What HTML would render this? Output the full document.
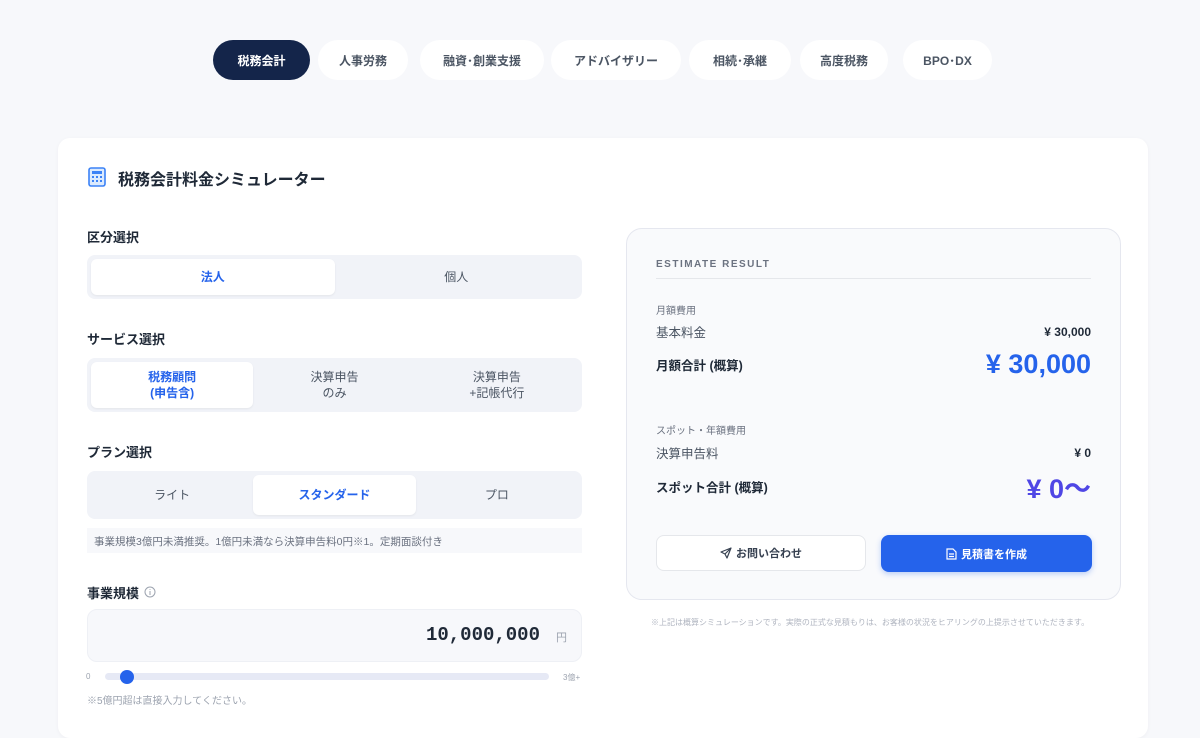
<!DOCTYPE html>
<html><head><meta charset="utf-8"><style>
*{box-sizing:border-box;margin:0;padding:0}
body{width:1200px;height:720px;overflow:hidden;background:#f7f8fb;font-family:"Liberation Sans","Noto Sans CJK JP",sans-serif;color:#1f2937;position:relative}
.tab{position:absolute;top:40px;height:40px;border-radius:20px;background:#fff;font-size:12px;font-weight:700;color:#4b5563;display:flex;align-items:center;justify-content:center}
.tab.on{background:#14254a;color:#fff}
.card{position:absolute;left:58px;top:138px;width:1090px;height:600px;background:#fff;border-radius:12px;box-shadow:0 1px 4px rgba(0,0,0,.04)}
.a{position:absolute}
.lbl{position:absolute;left:87px;font-size:13px;font-weight:700;color:#1f2937}
.seg{position:absolute;left:87px;width:495px;background:#f1f3f8;border-radius:8px;display:flex;padding:4px}
.seg div{flex:1;display:flex;align-items:center;justify-content:center;text-align:center;font-size:12px;color:#4b5563;border-radius:6px;line-height:1.35}
.seg .s{background:#fff;color:#2563eb;font-weight:700;box-shadow:0 1px 2px rgba(0,0,0,.06)}
.res{position:absolute;left:626px;top:228px;width:495px;height:372px;background:#f9fafc;border:1px solid #e5e7ef;border-radius:16px}
.row{position:absolute;left:29px;right:29px;display:flex;justify-content:space-between;align-items:center}
</style></head><body>
<div class="tab on" style="left:213px;width:97px">税務会計</div>
<div class="tab" style="left:318px;width:90px">人事労務</div>
<div class="tab" style="left:420px;width:124px">融資･創業支援</div>
<div class="tab" style="left:551px;width:130px">アドバイザリー</div>
<div class="tab" style="left:689px;width:102px">相続･承継</div>
<div class="tab" style="left:800px;width:88px">高度税務</div>
<div class="tab" style="left:903px;width:89px">BPO･DX</div>

<div class="card"></div>
<svg class="a" style="left:88px;top:167px" width="18" height="20" viewBox="0 0 18 20"><rect x="1" y="1" width="16" height="18" rx="2" fill="#dbeafe" stroke="#3b82f6" stroke-width="1.6"/><rect x="4" y="4" width="10" height="3" fill="#3b82f6"/><g fill="#3b82f6"><rect x="4" y="9" width="2" height="2"/><rect x="8" y="9" width="2" height="2"/><rect x="12" y="9" width="2" height="2"/><rect x="4" y="13" width="2" height="2"/><rect x="8" y="13" width="2" height="2"/><rect x="12" y="13" width="2" height="2"/></g></svg>
<div class="a" style="left:118px;top:166px;font-size:16px;font-weight:700;color:#1f2937">税務会計料金シミュレーター</div>

<div class="lbl" style="top:227px">区分選択</div>
<div class="seg" style="top:255px;height:44px"><div class="s">法人</div><div>個人</div></div>
<div class="lbl" style="top:329px">サービス選択</div>
<div class="seg" style="top:358px;height:54px"><div class="s">税務顧問<br>(申告含)</div><div>決算申告<br>のみ</div><div>決算申告<br>+記帳代行</div></div>
<div class="lbl" style="top:442px">プラン選択</div>
<div class="seg" style="top:471px;height:48px"><div>ライト</div><div class="s">スタンダード</div><div>プロ</div></div>
<div class="a" style="left:87px;top:528px;width:495px;height:25px;background:#f7f8fb;font-size:10.5px;color:#6b7280;padding:6px 7px">事業規模3億円未満推奨。1億円未満なら決算申告料0円※1。定期面談付き</div>
<div class="lbl" style="top:583px">事業規模</div>
<svg class="a" style="left:144px;top:586px" width="12" height="12"><circle cx="6" cy="6" r="5" fill="none" stroke="#9ca3af"/><path d="M6 5v4M6 3.2v.8" stroke="#9ca3af"/></svg>
<div class="a" style="left:87px;top:609px;width:495px;height:53px;background:#f7f8fb;border:1px solid #eef0f5;border-radius:10px"></div>
<div class="a" style="left:300px;top:624px;width:240px;text-align:right;font-family:'Liberation Mono',monospace;font-size:19px;font-weight:700;color:#1f2937">10,000,000</div>
<div class="a" style="left:556px;top:629px;font-size:11px;color:#9ca3af">円</div>
<div class="a" style="left:86px;top:672px;font-size:8px;color:#9ca3af">0</div>
<div class="a" style="left:105px;top:673px;width:444px;height:7px;background:#e6e9f5;border-radius:4px"></div>
<div class="a" style="left:120px;top:670px;width:14px;height:14px;border-radius:50%;background:#2563eb"></div>
<div class="a" style="left:563px;top:672px;font-size:8px;color:#9ca3af">3億+</div>
<div class="a" style="left:87px;top:692px;font-size:10px;color:#9ca3af">※5億円超は直接入力してください。</div>

<div class="res">
<div class="a" style="left:29px;top:30px;font-size:10px;letter-spacing:1.5px;color:#6b7280;font-weight:700">ESTIMATE RESULT</div>
<div class="a" style="left:29px;top:49px;width:435px;height:1px;background:#e5e7eb"></div>
<div class="a" style="left:29px;top:73px;font-size:10px;color:#6b7280">月額費用</div>
<div class="row" style="top:93px"><span style="font-size:12.5px;color:#4b5563">基本料金</span><span style="font-size:12px;font-weight:700">¥ 30,000</span></div>
<div class="row" style="top:118px;height:34px"><span style="font-size:12.5px;font-weight:700">月額合計 (概算)</span><span style="font-size:27px;font-weight:700;color:#2563eb">¥ 30,000</span></div>
<div class="a" style="left:29px;top:193px;font-size:10px;color:#6b7280">スポット・年額費用</div>
<div class="row" style="top:214px"><span style="font-size:12.5px;color:#4b5563">決算申告料</span><span style="font-size:12px;font-weight:700">¥ 0</span></div>
<div class="row" style="top:240px;height:34px"><span style="font-size:12.5px;font-weight:700">スポット合計 (概算)</span><span style="font-size:27px;font-weight:700;color:#4f46e5">¥ 0〜</span></div>
<div class="a" style="left:29px;top:306px;width:210px;height:36px;background:#fff;border:1px solid #e5e7eb;border-radius:8px;display:flex;align-items:center;justify-content:center;font-size:11px;font-weight:700;color:#374151"><svg width="12" height="12" viewBox="0 0 12 12" style="margin-right:4px"><path d="M11 1L1 5l4 2 2 4z M5 7l6-6" fill="none" stroke="#374151" stroke-width="1.2" stroke-linejoin="round"/></svg>お問い合わせ</div>
<div class="a" style="left:254px;top:306px;width:211px;height:37px;background:#2563eb;border-radius:8px;display:flex;align-items:center;justify-content:center;font-size:11px;font-weight:700;color:#fff;box-shadow:0 2px 6px rgba(37,99,235,.3)"><svg width="11" height="12" viewBox="0 0 11 12" style="margin-right:4px"><path d="M1 1h6l3 3v7H1z M3 6h5M3 8.5h5" fill="none" stroke="#fff" stroke-width="1.2"/></svg>見積書を作成</div>
</div>
<div class="a" style="left:651px;top:617px;font-size:8px;color:#b0b5c0">※上記は概算シミュレーションです。実際の正式な見積もりは、お客様の状況をヒアリングの上提示させていただきます。</div>
</body></html>
